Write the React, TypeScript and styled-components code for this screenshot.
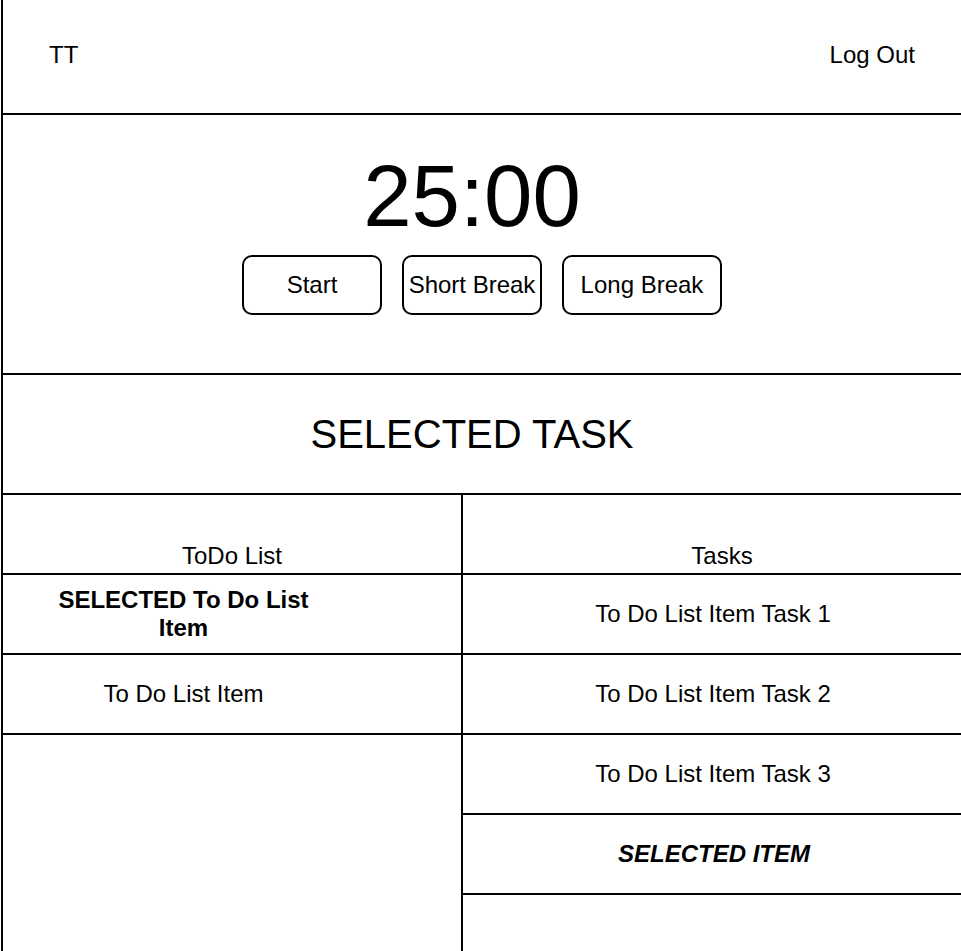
import React from 'react';
import styled, { createGlobalStyle } from 'styled-components';

const GlobalStyle = createGlobalStyle`
  html, body {
    margin: 0;
    padding: 0;
    background: #fff;
  }

  body {
    font-family: 'Liberation Sans', Arial, Helvetica, sans-serif;
    color: #000;
  }

  * {
    box-sizing: border-box;
  }
`;

const Page = styled.div`
  display: flex;
  flex-direction: column;
  min-height: 100vh;
  margin-left: 1px;
  border-left: 2px solid #000;
`;

const Header = styled.header`
  display: flex;
  align-items: center;
  justify-content: space-between;
  height: 115px;
  padding: 0 46px 3px 46px;
  border-bottom: 2px solid #000;
  font-size: 24px;
`;

const TimerSection = styled.section`
  display: flex;
  flex-direction: column;
  align-items: center;
  height: 260px;
  padding-top: 37px;
  border-bottom: 2px solid #000;
`;

const Clock = styled.div`
  padding-right: 20px;
  font-size: 87px;
  line-height: 1;
`;

const Controls = styled.div`
  display: flex;
  gap: 20px;
  margin-top: 16px;
`;

const ModeButton = styled.button<{ $width: number }>`
  width: ${(p) => p.$width}px;
  height: 60px;
  padding: 0;
  border: 2px solid #000;
  border-radius: 10px;
  background: #fff;
  color: #000;
  font-family: inherit;
  font-size: 24px;
  cursor: pointer;
`;

const TaskBanner = styled.section`
  display: flex;
  align-items: center;
  justify-content: center;
  height: 120px;
  padding-right: 20px;
  border-bottom: 2px solid #000;
  font-size: 40px;
`;

const Lists = styled.div`
  flex: 1;
  display: grid;
  grid-template-columns: 460px 1fr;
`;

const Column = styled.div<{ $divider?: boolean }>`
  display: flex;
  flex-direction: column;
  border-right: ${(p) => (p.$divider ? '2px solid #000' : 'none')};
`;

const ColumnTitle = styled.div<{ $shift?: number }>`
  display: flex;
  align-items: flex-end;
  justify-content: center;
  height: 80px;
  padding: 0 0 4px ${(p) => p.$shift ?? 0}px;
  border-bottom: 2px solid #000;
  font-size: 24px;
  line-height: 27px;
`;

const Row = styled.div<{ $inset?: number; $shift?: number }>`
  display: flex;
  align-items: center;
  justify-content: center;
  height: 80px;
  padding: 0 ${(p) => p.$inset ?? 0}px 0 ${(p) => p.$shift ?? 0}px;
  border-bottom: 2px solid #000;
  font-size: 24px;
`;

const Label = styled.span<{ $selected?: boolean; $italic?: boolean }>`
  max-width: 280px;
  text-align: center;
  line-height: 28px;
  font-weight: ${(p) => (p.$selected ? 700 : 400)};
  font-style: ${(p) => (p.$italic ? 'italic' : 'normal')};
`;

const todoItems = [
  { name: 'SELECTED To Do List Item', selected: true },
  { name: 'To Do List Item', selected: false },
];

const tasks = [
  { name: 'To Do List Item Task 1', selected: false },
  { name: 'To Do List Item Task 2', selected: false },
  { name: 'To Do List Item Task 3', selected: false },
  { name: 'SELECTED ITEM', selected: true },
];

export default function App() {
  return (
    <>
      <GlobalStyle />
      <Page>
        <Header>
          <span>TT</span>
          <span>Log Out</span>
        </Header>

        <TimerSection>
          <Clock>25:00</Clock>
          <Controls>
            <ModeButton $width={140}>Start</ModeButton>
            <ModeButton $width={140}>Short Break</ModeButton>
            <ModeButton $width={160}>Long Break</ModeButton>
          </Controls>
        </TimerSection>

        <TaskBanner>SELECTED TASK</TaskBanner>

        <Lists>
          <Column $divider>
            <ColumnTitle>ToDo List</ColumnTitle>
            {todoItems.map((item) => (
              <Row key={item.name} $inset={97}>
                <Label $selected={item.selected}>{item.name}</Label>
              </Row>
            ))}
          </Column>
          <Column>
            <ColumnTitle $shift={20}>Tasks</ColumnTitle>
            {tasks.map((task) => (
              <Row key={task.name} $shift={task.selected ? 4 : 2}>
                <Label $selected={task.selected} $italic={task.selected}>
                  {task.name}
                </Label>
              </Row>
            ))}
          </Column>
        </Lists>
      </Page>
    </>
  );
}
